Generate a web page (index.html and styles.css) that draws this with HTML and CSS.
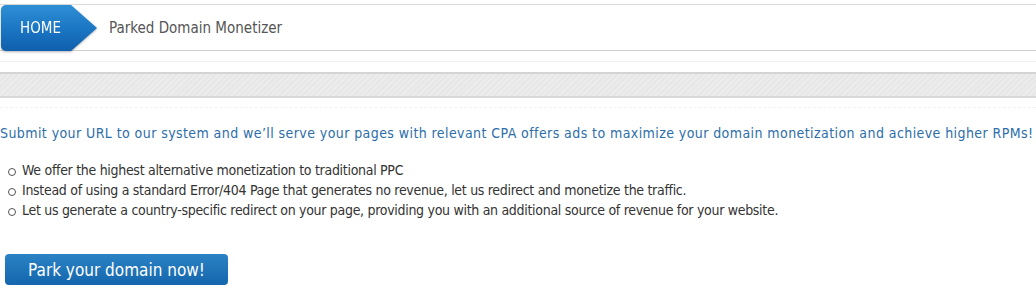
FILE: index.html
```html
<!DOCTYPE html>
<html lang="en">
<head>
    <meta charset="UTF-8">
    <title>Parked Domain Monetizer</title>
    <link rel="stylesheet" href="styles.css">
</head>
<body>

<!-- Breadcrumb bar -->
<div class="crumbs">
    <span class="crumb-shadow"><a class="crumb-home" href="#">HOME</a></span>
    <span class="crumb-current">Parked Domain Monetizer</span>
</div>
<div class="crumbs-under"></div>

<!-- Striped separator -->
<div class="stripe-bar"></div>
<div class="dash-line"></div>

<div class="content">
    <p class="intro">Submit your URL to our system and we’ll serve your pages with relevant CPA offers ads to maximize your domain monetization and achieve higher RPMs!</p>

    <ul class="features">
        <li>We offer the highest alternative monetization to traditional PPC</li>
        <li>Instead of using a standard Error/404 Page that generates no revenue, let us redirect and monetize the traffic.</li>
        <li>Let us generate a country-specific redirect on your page, providing you with an additional source of revenue for your website.</li>
    </ul>

    <button class="park-button">Park your domain now!</button>
</div>

</body>
</html>
```

FILE: styles.css
```css
/* General styles */
* {
    box-sizing: border-box;
    margin: 0;
    padding: 0;
}
body {
    font-family: "DejaVu Sans Condensed", "DejaVu Sans", sans-serif;
    font-size: 14px;
    color: #333;
    background: #fff;
}

/* Breadcrumb */
.crumbs {
    margin-top: 4px;
    height: 47px;
    border-top: 1px solid #dcdcdc;
    border-bottom: 1px solid #cfcfcf;
    display: flex;
    align-items: center;
}
.crumb-shadow {
    display: block;
    margin-left: 1px;
    margin-top: 1px;
    filter: drop-shadow(0 1px 1px rgba(0, 0, 0, 0.3));
}
.crumb-home {
    display: flex;
    align-items: center;
    width: 96px;
    height: 46px;
    padding-left: 19px;
    font-size: 15px;
    color: #fff;
    text-decoration: none;
    background: linear-gradient(#2d8fd5, #1a74c2 55%, #0f5fac);
    border-radius: 5px;
    clip-path: polygon(0 0, 70px 0, 96px 50%, 70px 100%, 0 100%);
}
.crumb-current {
    margin-left: 12px;
    font-size: 15px;
    color: #555;
}
.crumbs-under {
    height: 11px;
    border-bottom: 1px solid #f0f0f0;
}

/* Grey striped bar */
.stripe-bar {
    margin-top: 10px;
    height: 26px;
    border-top: 2px solid #d4d4d4;
    border-bottom: 2px solid #d9d9d9;
    background: repeating-linear-gradient(135deg, #e7e7e7 0, #e7e7e7 2px, #ececec 2px, #ececec 4px);
}
.dash-line {
    margin-top: 9px;
    border-top: 1px dashed #f2f2f2;
}

/* Content */
.content {
    padding-top: 15px;
}
.intro {
    color: #2c6eaa;
    line-height: 20px;
    letter-spacing: 0.42px;
}
.features {
    margin-top: 17px;
    list-style: none;
    line-height: 20px;
    letter-spacing: -0.3px;
}
.features li {
    position: relative;
    padding-left: 22px;
}
.features li::before {
    content: "";
    position: absolute;
    left: 8px;
    top: 8px;
    width: 6px;
    height: 6px;
    border: 1px solid #555;
    border-radius: 50%;
}
.park-button {
    margin-top: 34px;
    margin-left: 5px;
    width: 223px;
    height: 31px;
    border: none;
    border-radius: 4px;
    font-family: inherit;
    font-size: 17px;
    color: #fff;
    background: linear-gradient(#2a82c4, #1566ad);
    cursor: pointer;
}
```
